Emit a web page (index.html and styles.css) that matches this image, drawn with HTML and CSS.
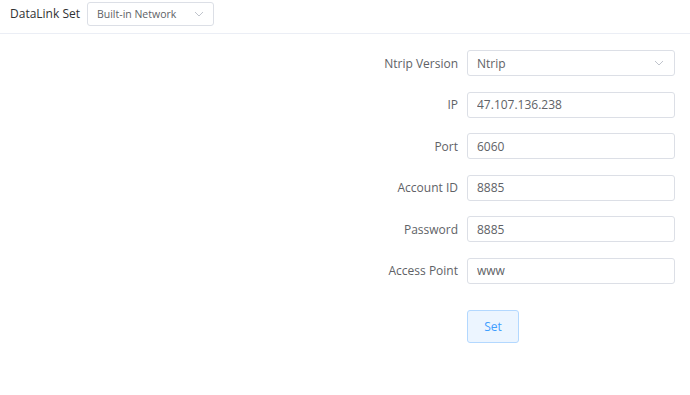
FILE: index.html
```html
<!DOCTYPE html>
<html>
<head>
	<meta charset="UTF-8">
	<link rel="stylesheet" href="styles.css">
</head>
<body>
 <div class="head">
	 <span class="head-label">DataLink Set</span>
	 <div class="sel sel-small">
		 <span>Built-in Network</span>
		 <svg class="arrow" width="10" height="6" viewBox="0 0 10 6"><path d="M1 1 L5 5 L9 1" fill="none" stroke="#c0c4cc" stroke-width="1"/></svg>
	 </div>
 </div>

 <div class="form">
	 <div class="row">
		 <label>Ntrip Version</label>
		 <div class="sel">
			 <span>Ntrip</span>
			 <svg class="arrow" width="10" height="6" viewBox="0 0 10 6"><path d="M1 1 L5 5 L9 1" fill="none" stroke="#c0c4cc" stroke-width="1"/></svg>
		 </div>
	 </div>
	 <div class="row">
		 <label>IP</label>
		 <input type="text" value="47.107.136.238">
	 </div>
	 <div class="row">
		 <label>Port</label>
		 <input type="text" value="6060">
	 </div>
	 <div class="row">
		 <label>Account ID</label>
		 <input type="text" value="8885">
	 </div>
	 <div class="row">
		 <label>Password</label>
		 <input type="text" value="8885">
	 </div>
	 <div class="row">
		 <label>Access Point</label>
		 <input type="text" value="www">
	 </div>
	 <div class="row btn-row">
		 <label></label>
		 <button class="btn">Set</button>
	 </div>
 </div>
</body>
</html>
```
FILE: styles.css
```css
* {
	margin: 0;
	padding: 0;
	box-sizing: border-box;
}
body {
	font-family: "Open Sans", "Noto Sans", sans-serif;
	font-size: 12px;
	color: #606266;
	background: #fff;
}
.head {
	display: flex;
	align-items: center;
	height: 34px;
	padding: 0 0 6px 10px;
	border-bottom: 1px solid #ebeef5;
}
.head-label {
	font-size: 12px;
	color: #303133;
	margin-right: 7px;
}
.sel {
	display: flex;
	align-items: center;
	justify-content: space-between;
	width: 208px;
	height: 26px;
	padding: 0 10px 0 9px;
	border: 1px solid #dcdfe6;
	border-radius: 3px;
	color: #606266;
}
.sel-small {
	width: 127px;
	height: 24px;
	padding: 0 9px;
	font-size: 10.5px;
}
.form {
	margin: 16px 0 0 358px;
	width: 317px;
}
.row {
	display: flex;
	align-items: center;
	height: 26px;
	margin-bottom: 15.6px;
}
.row label {
	width: 109px;
	padding-right: 9px;
	text-align: right;
}
.row input {
	width: 208px;
	height: 26px;
	padding: 0 9px;
	border: 1px solid #dcdfe6;
	border-radius: 3px;
	outline: none;
	font: 12px "Open Sans", "Noto Sans", sans-serif;
	color: #606266;
}
.btn-row {
	height: 33px;
	margin-top: 26px;
}
.btn {
	width: 52px;
	height: 33px;
	background: #ecf5ff;
	border: 1px solid #b3d8ff;
	border-radius: 3px;
	color: #409eff;
	font: 12px "Open Sans", "Noto Sans", sans-serif;
}
```
